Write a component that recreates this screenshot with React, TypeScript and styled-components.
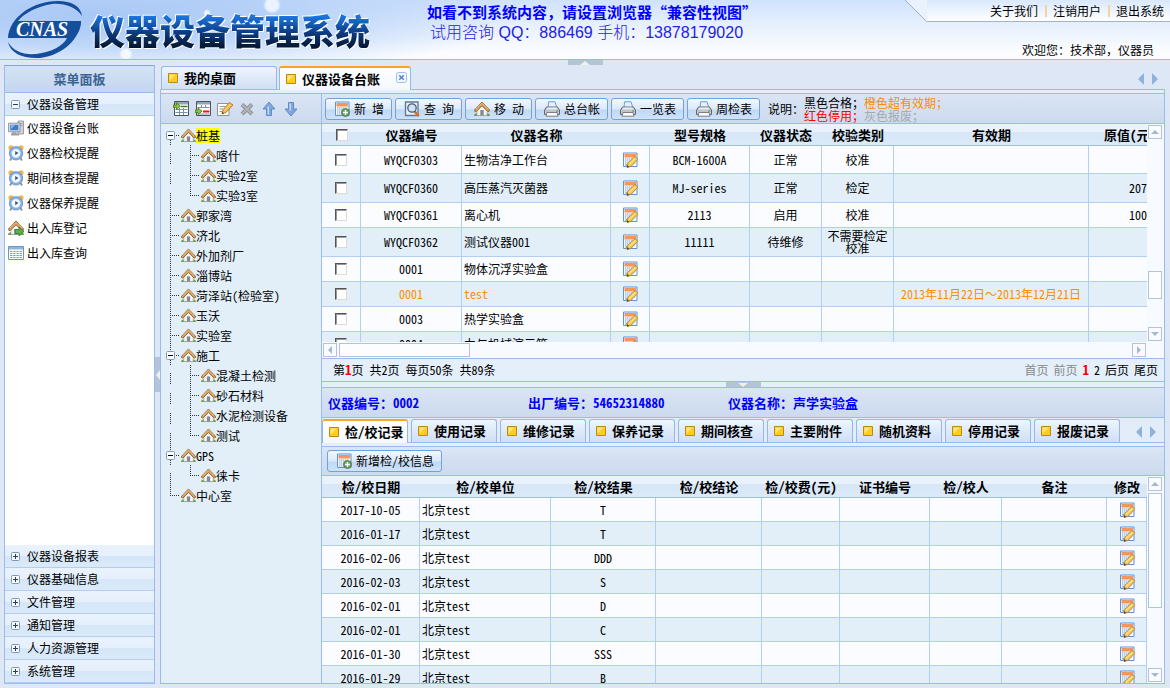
import React from "react";
import styled, { createGlobalStyle, css } from "styled-components";

const line = "#99bbee";
const cellLine = "#b2cef5";
const pale = "#e2eff8";

const GlobalStyle = createGlobalStyle`
  * { box-sizing: border-box; }
  html, body, #root { height: 100%; }
  body {
    margin: 0;
    background: #dde7f6;
    color: #000;
    font: 12px/16px "Noto Sans CJK SC", sans-serif;
    font-feature-settings: "hwid";
  }
  button, input { font: inherit; font-feature-settings: inherit; color: inherit; margin: 0; }
  button { padding: 0; border: 0; background: none; cursor: pointer; }
  a { color: inherit; text-decoration: none; }
  svg { display: block; flex: none; }
`;

/* ---------- icons ---------- */

const HouseShape = () => (
  <>
    <path d="M0 15c0-2 2-3.500 4-2.500h8c2-1 4 .5 4 2.500z" fill="#6f9f48" />
    <path d="M3 7.500 8 3l5 4.500V14.500H3z" fill="#f3f4f6" stroke="#9a9ca3" strokeWidth=".6" />
    <path d="M6.300 9h3.400v5.500H6.300z" fill="#858995" />
    <path d="M0 9.500 8 1l8 8.500-2 1.300-6-6-6 6z" fill="#d39b57" stroke="#8f6535" strokeWidth=".9" />
    <path d="M2 8.200 8 2.300l6 5.900" fill="none" stroke="#ecc48c" strokeWidth=".9" />
  </>
);

const House = ({ size = 15 }: { size?: number }) => (
  <svg width={size} height={size} viewBox="0 0 16 16" aria-hidden="true">
    <HouseShape />
  </svg>
);

const HouseGo = () => (
  <svg width="16" height="16" viewBox="0 0 16 16" aria-hidden="true">
    <HouseShape />
    <path d="M7 9.500h4V7l5 4.500-5 4.500v-2.500H7z" fill="#5fae4c" stroke="#2f7a2a" strokeWidth=".8" />
  </svg>
);

const Clock = () => (
  <svg width="16" height="16" viewBox="0 0 16 16" aria-hidden="true">
    <circle cx="3" cy="2.800" r="2.600" fill="#f0b54a" />
    <circle cx="13" cy="2.800" r="2.600" fill="#f0b54a" />
    <path d="M3.500 13 2 15.500M12.500 13l1.500 2.500" stroke="#8b919b" strokeWidth="1.800" />
    <circle cx="8" cy="8.300" r="6.700" fill="#84b0ea" stroke="#5584c4" strokeWidth=".7" />
    <circle cx="8" cy="8.300" r="4.400" fill="#f8fbff" stroke="#b5cdec" strokeWidth=".6" />
    <path d="M7.200 6v4.200L10.500 8z" fill="#39557e" />
  </svg>
);

const Computer = () => (
  <svg width="16" height="16" viewBox="0 0 16 16" aria-hidden="true">
    <path d="M10 1h5.500v13H10z" fill="#d0d4d8" stroke="#868c94" strokeWidth=".8" />
    <path d="M11 3.500h3.500M11 5.500h3.500" stroke="#8b9199" strokeWidth=".8" />
    <path d="M.6 3.200h11.400v8.600H.6z" fill="#dfe3e8" stroke="#858c96" strokeWidth=".9" />
    <path d="M2.200 4.700h8.200v5.600H2.200z" fill="#3f7ccd" />
    <path d="M3 5.300h4L3 9z" fill="#8fbaf0" />
    <path d="M4 12.200h4.500v1.300H11V15.500H3v-2h1z" fill="#9aa1aa" />
  </svg>
);

const Sheet = () => (
  <svg width="16" height="16" viewBox="0 0 16 16" aria-hidden="true">
    <path d="M.5 1.500h15v13H.5z" fill="#fff" stroke="#6f93c6" />
    <path d="M1 2h14v2.500H1z" fill="#8fb5e6" />
    <path d="M2 6.500h12M2 8.500h12M2 10.500h12M2 12.500h12" stroke="#7c9ac8" strokeDasharray="2.400 .8" />
  </svg>
);

const SheetBase = () => (
  <>
    <path d="M1.500 1h13.500v13.500H1.500z" fill="#f6f9fd" stroke="#5f92d6" />
    <path d="M2.500 2h11.500v3.500H2.500z" fill="#f5975a" />
    <path d="M3 7h10M3 9h10M3 11h10M3 13h8" stroke="#a9c0e2" strokeWidth="1.300" strokeDasharray="1.400 .6" />
  </>
);

const SheetEdit = () => (
  <svg width="16" height="16" viewBox="0 0 16 16" aria-hidden="true">
    <SheetBase />
    <path d="M4 12h3v2.500H4z" fill="#8cbd7c" />
    <path d="m5 15.300.6-3.800 7.400-7 3 2.700-7.200 7.300z" fill="#f5c94e" stroke="#b07c28" strokeWidth=".8" />
    <path d="M7 12.500 13.500 6.300" stroke="#fbe59a" strokeWidth="1.100" />
    <path d="m4.800 15.700.6-2.400 2 1.600z" fill="#5b4326" />
  </svg>
);

const SheetAdd = () => (
  <svg width="16" height="16" viewBox="0 0 16 16" aria-hidden="true">
    <SheetBase />
    <circle cx="11.500" cy="11.500" r="4" fill="#6a9d5e" stroke="#41723a" strokeWidth=".7" />
    <path d="M11.500 9v5M9 11.500h5" stroke="#fff" strokeWidth="1.400" />
  </svg>
);

const SheetSearch = () => (
  <svg width="16" height="16" viewBox="0 0 16 16" aria-hidden="true">
    <path d="M1.500 1h12.500v13.500H1.500z" fill="#eef2f8" stroke="#5f7598" strokeWidth="1.300" />
    <path d="m10.500 10.500 4.300 4.500" stroke="#c97a2b" strokeWidth="2.600" />
    <circle cx="8" cy="7" r="4.200" fill="#cfe3f7" stroke="#4c5d78" strokeWidth="1.300" />
  </svg>
);

const Printer = () => (
  <svg width="16" height="16" viewBox="0 0 16 16" aria-hidden="true">
    <path d="M4.500.8h6.500L13 7H4z" fill="#e6f1ff" stroke="#6f9ad8" strokeWidth="1" />
    <path d="M2.500 6h11l2 3v4.500H.5V9z" fill="#bfc5cc" stroke="#666d78" strokeWidth="1" />
    <path d="M3.500 6.500h9l1 2H2.500z" fill="#e8ecf0" />
    <path d="M3 11.500h10l1 3.700H2z" fill="#fafafa" stroke="#6f757e" strokeWidth=".9" />
    <path d="M12 10h2.500" stroke="#5b9a4c" />
  </svg>
);

const InsertAbove = () => (
  <svg width="16" height="16" viewBox="0 0 16 16" aria-hidden="true">
    <path d="M1.500.5h14v14h-14z" fill="#fff" stroke="#4b535c" />
    <path d="M2 1h13v2.500H2z" fill="#8fa8b4" />
    <path d="M2.500 8.500h12M2.500 11.500h12M6.500 7v7M10.500 7v7" stroke="#7f92a2" />
    <path d="M0 4h3.500V1.800l4 3.400-4 3.400V6.400H0z" fill="#8ac832" stroke="#3d6b12" strokeWidth=".7" />
    <path d="M8 5.500h6.500" stroke="#2f7a1e" strokeWidth="1.400" />
  </svg>
);

const InsertBelow = () => (
  <svg width="16" height="16" viewBox="0 0 16 16" aria-hidden="true">
    <path d="M1.500.5h14v14h-14z" fill="#fff" stroke="#4b535c" />
    <path d="M2 1h13v2.500H2z" fill="#8fa8b4" />
    <path d="M2.500 6.500h12M2.500 13h12M6.500 4v3M10.500 4v3" stroke="#7f92a2" />
    <path d="M0 9h3V6.800l4 3.400-4 3.400v-2.200H0z" fill="#8ac832" stroke="#3d6b12" strokeWidth=".7" />
    <path d="M8 10.500h6.500" stroke="#f01414" strokeWidth="2" />
  </svg>
);

const NoteEdit = () => (
  <svg width="16" height="16" viewBox="0 0 16 16" aria-hidden="true">
    <path d="M.5 2.500H12v12H.5z" fill="#fbfbf8" stroke="#93938d" />
    <path d="M2.500 5.500h6M2.500 8h4M2.500 10.500h3" stroke="#999" />
    <path d="m5 12.800 1-4 6.500-7.300L16 4l-7 7.500z" fill="#f4b544" stroke="#a3702a" strokeWidth=".8" />
    <path d="m7 10 6.500-7" stroke="#fbdc8e" strokeWidth="1.100" />
    <path d="m4.800 13.200.6-2.200 1.700 1.200z" fill="#4d3a22" />
  </svg>
);

const Cross = () => (
  <svg width="16" height="16" viewBox="0 0 16 16" aria-hidden="true">
    <path d="m3 3.500 10 9.500M13 3.500 3 13" stroke="#8d9197" strokeWidth="4" />
    <path d="m3.300 3.800 9.400 8.900M12.700 3.800 3.300 12.700" stroke="#b0b4ba" strokeWidth="2" />
  </svg>
);

const Arrow = ({ down = false }: { down?: boolean }) => (
  <svg width="16" height="16" viewBox="0 0 16 16" aria-hidden="true">
    <path
      d={down ? "M5.500 1.500h5v6.500h3.500L8 15 2 8h3.500z" : "M5.500 14.500h5V8h3.500L8 1 2 8h3.500z"}
      fill="#7fa6de"
      stroke="#5f86be"
      strokeWidth=".9"
    />
    <path d={down ? "M6.500 2.500h1.500v7H6.500z" : "M6.500 5.500h1.500v8H6.500z"} fill="#c4d9f5" />
  </svg>
);

const TabMark = () => (
  <svg width="10" height="10" viewBox="0 0 10 10" aria-hidden="true">
    <path d="M.5.5h9v9h-9z" fill="#ffcd1f" stroke="#b98a0c" />
    <path d="M1.500 1.500h6l-6 6z" fill="#ffe678" />
  </svg>
);

const CloseMark = () => (
  <svg width="11" height="11" viewBox="0 0 11 11" aria-hidden="true">
    <rect x=".5" y=".5" width="10" height="10" rx="2" fill="#f4f9ff" stroke="#9dbfe8" />
    <path d="m3.200 3.200 4.600 4.600M7.800 3.200 3.200 7.800" stroke="#5b86c4" strokeWidth="1.600" />
  </svg>
);

const FoldMark = ({ open = false }: { open?: boolean }) => (
  <svg width="9" height="9" viewBox="0 0 9 9" aria-hidden="true">
    <rect x=".5" y=".5" width="8" height="8" rx="1" fill="#f5f9fd" stroke="#8299b5" />
    <path d={open ? "M2 4.500h5" : "M2 4.500h5M4.500 2v5"} stroke="#23415f" />
  </svg>
);

type Dir = "up" | "down" | "left" | "right";
const turns: Record<Dir, number> = { up: 0, right: 90, down: 180, left: 270 };

const Wedge = ({ dir }: { dir: Dir }) => (
  <svg width="8" height="8" viewBox="0 0 8 8" aria-hidden="true">
    <path d="M0 6h8L4 2z" fill="#a3b9d6" transform={`rotate(${turns[dir]} 4 4)`} />
  </svg>
);

const TabArrow = ({ right = false }: { right?: boolean }) => (
  <svg width="6" height="12" viewBox="0 0 6 12" aria-hidden="true">
    <path d={right ? "M0 0v12l6-6z" : "M6 0v12L0 6z"} fill="#8db2dc" />
  </svg>
);

const Logo = () => (
  <svg width="78" height="59" viewBox="0 0 78 59" role="img" aria-label="CNAS">
    <path
      d="M2 38C3 18 26 1 52 1c13 0 23 5 24 15C70 7 58 3 46 4 32 6 18 13 12 21h63c0 6-2 12-7 17z"
      fill="#154f9c"
    />
    <path d="M2 42c5 9 15 13 28 12 16-2 27-8 31-16l9-8 5-9c-1 17-17 34-41 37C17 59 4 53 2 42z" fill="#154f9c" />
    <text
      x="10"
      y="36"
      fill="#fff"
      fontFamily="Liberation Serif, serif"
      fontSize="20"
      fontWeight="700"
      fontStyle="italic"
    >
      CNAS
    </text>
  </svg>
);

/* ---------- header ---------- */

const Page = styled.div`
  display: flex;
  flex-direction: column;
  height: 100%;
  min-height: 560px;
  overflow: hidden;
`;

const Header = styled.header`
  display: flex;
  flex: 0 0 60px;
  border-bottom: 1px solid ${line};
  background:
    radial-gradient(circle at 272px 5px, #eaf3ff 6px, transparent 9px),
    radial-gradient(circle at 207px 13px, #eaf3ff 2px, transparent 4px),
    radial-gradient(circle at 126px 54px, #f4f9ff 4px, transparent 7px),
    radial-gradient(ellipse 420px 64px at 100px 16px, #a8c8f5 0, rgba(176, 205, 247, 0.8) 45%, transparent 100%),
    linear-gradient(#cfe2fd 0, #e8f1fd 45%, #fcfdff 90%);
`;

const Brand = styled.div`
  display: flex;
  flex: 0 0 427px;
  gap: 6px;
  padding-left: 6px;
`;

const Title = styled.h1`
  margin: 6px 0 0;
  font-size: 35px;
  line-height: 48px;
  font-weight: 900;
  white-space: nowrap;
  color: transparent;
  background: linear-gradient(#1c74dc 20%, #0d3c84 50%, #04142a 80%);
  background-clip: text;
  -webkit-background-clip: text;
  filter: drop-shadow(1px 1px 0 #fff) drop-shadow(-1px -1px 0 #fff);
`;

const Notice = styled.div`
  flex: none;
  color: #00f;
  white-space: nowrap;
  font-feature-settings: normal;
`;

const NoticeMain = styled.p`
  margin: 0;
  font-size: 15px;
  line-height: 23px;
  font-weight: 700;
`;

const NoticeSub = styled.p`
  margin: 0 0 0 3px;
  font: 16px/20px "Liberation Sans", "Noto Sans CJK SC", sans-serif;
  font-weight: 300;
  color: #2222e8;
`;

const Account = styled.div`
  flex: none;
  margin-left: auto;
  text-align: right;
`;

const LinkBar = styled.nav`
  display: flex;
  height: 22px;
`;

const Links = styled.div`
  display: flex;
  align-items: center;
  justify-content: flex-end;
  gap: 7px;
  width: 243px;
  padding-right: 6px;
  border-bottom: 1px solid #a9b3c0;
  background: linear-gradient(#d9e8fc, #fff);

  a + a {
    padding-left: 6px;
    border-left: 2px solid #f3d3a0;
    line-height: 12px;
  }
`;

const Welcome = styled.p`
  margin: 20px 16px 0 0;
  font-feature-settings: normal;
`;

const Handle = styled.button<{ $side: "top" | "left" | "down" }>`
  display: flex;
  align-items: center;
  justify-content: center;
  align-self: center;
  overflow: hidden;
  background: #b4c3d8;
  ${(p) =>
    p.$side === "left"
      ? css`
          width: 5px;
          height: 35px;
        `
      : css`
          width: 35px;
          height: 5px;
        `}
`;

const HandleMark = ({ side }: { side: "top" | "left" | "down" }) => (
  <svg width={side === "left" ? 4 : 12} height={side === "left" ? 12 : 4} aria-hidden="true">
    <path
      d={side === "left" ? "M4 1v10L0 6z" : side === "top" ? "M1 4h10L6 0z" : "M1 0h10L6 4z"}
      fill="#eef0ea"
    />
  </svg>
);

/* ---------- frame ---------- */

const TopSplit = styled.div`
  display: flex;
  flex: 0 0 5px;
  flex-direction: column;
`;

const Body = styled.div`
  display: flex;
  flex: 1;
  min-height: 0;
  padding: 0 5px 4px 4px;
`;

const SideSplit = styled.div`
  display: flex;
  flex: 0 0 5px;
`;

const Sidebar = styled.aside`
  display: flex;
  flex: 0 0 151px;
  flex-direction: column;
  border: 1px solid ${line};
  border-top-color: #86a5d3;
  background: #fff;
`;

const SideTitle = styled.h2`
  margin: 0;
  height: 27px;
  border-bottom: 1px solid ${line};
  background: linear-gradient(#d5e2f4, #c3d6f0);
  color: #3d6594;
  font-size: 13px;
  line-height: 25px;
  text-align: center;
`;

const Section = styled.button`
  display: flex;
  flex: none;
  align-items: center;
  gap: 7px;
  width: 100%;
  height: 23px;
  padding-left: 6px;
  border-bottom: 1px solid ${cellLine};
  background: linear-gradient(#e9f2fd 0, #e6f0fc 50%, #d5e6f8 50%, #daeafa 100%);
`;

const Menu = styled.ul`
  flex: 1;
  min-height: 0;
  margin: 0;
  padding: 0;
  list-style: none;
  overflow: hidden;
`;

const MenuLink = styled.a`
  display: flex;
  align-items: center;
  gap: 3px;
  height: 25px;
  padding: 0 0 2px 3px;
`;

const Main = styled.main`
  display: flex;
  flex: 1;
  flex-direction: column;
  min-width: 0;
`;

const TabStrip = styled.div<{ $inner?: boolean }>`
  display: flex;
  flex: none;
  align-items: flex-end;
  gap: ${(p) => (p.$inner ? 3 : 2)}px;
  height: 24px;
  padding-left: ${(p) => (p.$inner ? 0 : 1)}px;
  background: ${(p) => (p.$inner ? "#e3ecf9" : "transparent")};
`;

const Tab = styled.button<{ $active?: boolean; $width: number }>`
  display: flex;
  flex: 0 0 ${(p) => p.$width}px;
  align-items: center;
  gap: 6px;
  height: 23px;
  padding: 0 3px 0 6px;
  border: 1px solid #94b8e8;
  border-bottom: 0;
  border-radius: 3px 3px 0 0;
  background: linear-gradient(#eef5fe, #cfdff5);
  font-size: 13px;
  font-weight: 700;
  white-space: nowrap;

  svg:last-child:not(:first-child) {
    align-self: flex-start;
    margin: 4px 0 0 auto;
  }

  ${(p) =>
    p.$active &&
    css`
      position: relative;
      height: 24px;
      margin-bottom: -1px;
      border-top: 2px solid #f5a623;
      background: linear-gradient(#fff, #f4f8fe);
    `}
`;

const TabArrows = styled.div<{ $inner?: boolean }>`
  display: flex;
  gap: 8px;
  align-self: center;
  margin-left: auto;
  padding: 4px ${(p) => (p.$inner ? 8 : 7)}px 0 0;
`;

const Panel = styled.div<{ $outer?: boolean }>`
  display: flex;
  flex: 1;
  min-height: 0;
  padding-top: 3px;
  border-top: 1px solid ${line};
  background: #e5eefb;
  ${(p) =>
    p.$outer &&
    css`
      border: 1px solid ${line};
    `}
`;

const Column = styled.section`
  display: flex;
  flex: 1;
  flex-direction: column;
  min-width: 0;
  min-height: 0;
  border-top: 1px solid ${line};
`;

const Toolbar = styled.div<{ $gap: number; $pad: number; $low?: boolean }>`
  display: flex;
  flex: none;
  align-items: center;
  gap: ${(p) => p.$gap}px;
  height: ${(p) => (p.$low ? 29 : 30)}px;
  padding: 0 ${(p) => p.$pad}px;
  border-bottom: 1px solid ${line};
  background: linear-gradient(#dae5f5, #ccdaee);
  white-space: nowrap;
`;

/* ---------- tree ---------- */

const TreePanel = styled.section`
  display: flex;
  flex: 0 0 161px;
  flex-direction: column;
  border-top: 1px solid ${line};
  border-right: 1px solid ${line};
  background: #e2eef8;
`;

const Tree = styled.ul`
  margin: 0;
  padding: 1px 0 0;
  list-style: none;
`;

const TreeRow = styled.li`
  display: flex;
  align-items: center;
  height: 20px;
  white-space: nowrap;
`;

const TreeLink = styled.a<{ $picked?: boolean }>`
  line-height: 15px;
  background: ${(p) => (p.$picked ? "#ff0" : "none")};
`;

type Joint = "tee" | "end" | "guide" | "first" | "fold";

const jointPath: Record<Joint, string> = {
  tee: "M9.500 0v20M11 10.500h8",
  end: "M9.500 0v11M11 10.500h8",
  guide: "M9.500 8v12",
  first: "M9.500 15v5M15 10.500h4",
  fold: "M9.500 0v6M9.500 15v5M15 10.500h4",
};

const Connector = ({ kind }: { kind: Joint }) => (
  <svg width="20" height="20" viewBox="0 0 20 20" aria-hidden="true">
    <path d={jointPath[kind]} stroke="#333" strokeDasharray="1 1" />
    {(kind === "first" || kind === "fold") && (
      <g>
        <rect x="5.500" y="6.500" width="8" height="8" rx="1" fill="#fff" stroke="#7e9cc4" />
        <path d="M7 10.500h5" stroke="#000" />
      </g>
    )}
  </svg>
);

const tree: { name: string; joints: Joint[]; picked?: boolean }[] = [
  { name: "桩基", joints: ["first"], picked: true },
  { name: "喀什", joints: ["guide", "tee"] },
  { name: "实验2室", joints: ["guide", "tee"] },
  { name: "实验3室", joints: ["guide", "end"] },
  { name: "郭家湾", joints: ["tee"] },
  { name: "济北", joints: ["tee"] },
  { name: "外加剂厂", joints: ["tee"] },
  { name: "淄博站", joints: ["tee"] },
  { name: "菏泽站(检验室)", joints: ["tee"] },
  { name: "玉沃", joints: ["tee"] },
  { name: "实验室", joints: ["tee"] },
  { name: "施工", joints: ["fold"] },
  { name: "混凝土检测", joints: ["guide", "tee"] },
  { name: "砂石材料", joints: ["guide", "tee"] },
  { name: "水泥检测设备", joints: ["guide", "tee"] },
  { name: "测试", joints: ["guide", "end"] },
  { name: "GPS", joints: ["fold"] },
  { name: "徕卡", joints: ["guide", "end"] },
  { name: "中心室", joints: ["end"] },
];

/* ---------- content ---------- */

const ToolButton = styled.button`
  display: flex;
  flex: none;
  align-items: center;
  gap: 4px;
  height: 22px;
  padding: 0 7px 0 8px;
  border: 1px solid #6ea3dc;
  border-radius: 3px;
  background: linear-gradient(#f2f8ff 0, #dbe9fa 50%, #bfd8f4 55%, #cfe3f9 100%);
  white-space: pre;
`;

const Legend = styled.div`
  display: flex;
  align-items: center;
  margin-left: 5px;
`;

const LegendGrid = styled.div`
  display: grid;
  grid-template-columns: 60px auto;
  line-height: 13px;
`;

const Tint = styled.span<{ $color: string }>`
  color: ${(p) => p.$color};
`;

const FullWidth = styled.span`
  font-feature-settings: normal;
`;

const Viewport = styled.div<{ $grow?: boolean }>`
  display: flex;
  flex: ${(p) => (p.$grow ? "1 1 0" : "0 0 218px")};
  min-height: 0;
  background: #f7faff;
`;

const Clip = styled.div`
  flex: 1;
  min-width: 0;
  overflow: hidden;
`;

const Table = styled.table`
  width: 100%;
  table-layout: fixed;
  border-collapse: separate;
  border-spacing: 0;
`;

const Head = styled.th`
  height: 22px;
  padding: 0;
  border-bottom: 1px solid ${line};
  background: linear-gradient(#eaf3fd 0, #e8f1fc 38%, #d7e7f7 38%, #dbe9f8 100%);
  font-size: 13px;
  font-weight: 700;
  white-space: nowrap;
`;

const Row = styled.tr<{ $height: number; $late?: boolean }>`
  height: ${(p) => p.$height}px;
  color: ${(p) => (p.$late ? "#ff8c00" : "inherit")};
  background: #fafcff;
  &:nth-child(even) {
    background: ${pale};
  }
`;

const Cell = styled.td<{ $left?: boolean; $amount?: boolean }>`
  padding: 0 0 0 ${(p) => (p.$amount ? 40 : p.$left ? 2 : 0)}px;
  border-right: 1px solid ${cellLine};
  border-bottom: 1px solid ${cellLine};
  line-height: 12px;
  text-align: ${(p) => (p.$left || p.$amount ? "left" : "center")};
  white-space: nowrap;
`;

const Tick = styled.input`
  display: block;
  width: 12px;
  height: 12px;
  margin: 0 auto;
  appearance: none;
  background: #fff;
  border: 1px solid #dcdcd4;
  border-top-color: #555;
  border-left-color: #555;
  box-shadow: inset 1px 1px 0 #999;
`;

const IconButton = styled.button`
  display: block;
  margin: 0 auto;
`;

const PlainButton = styled.button`
  display: block;
`;

const VBar = styled.div`
  display: flex;
  flex: 0 0 17px;
  flex-direction: column;
  padding: 1px 2px 1px 1px;
`;

const HBar = styled.div`
  display: flex;
  flex: 0 0 16px;
  gap: 2px;
  padding: 1px 18px 1px 1px;
  background: #f7faff;
`;

const BarButton = styled.button`
  display: flex;
  flex: 0 0 14px;
  align-items: center;
  justify-content: center;
  width: 14px;
  height: 14px;
  border: 1px solid #b2c3da;
  background: #f9fbff;
`;

const VThumb = styled.div<{ $top: number; $size: number }>`
  flex: 0 1 ${(p) => p.$size}px;
  width: 14px;
  margin-top: ${(p) => p.$top}px;
  margin-bottom: auto;
  border: 1px solid #b2c3da;
  background: #fbfdff;
`;

const HThumb = styled.div`
  flex: 0 0 131px;
  height: 14px;
  margin-right: auto;
  border: 1px solid #b2c3da;
  background: #fbfdff;
`;

const Pager = styled.div`
  display: flex;
  flex: 0 0 24px;
  align-items: center;
  gap: 6px;
  padding: 0 6px 0 11px;
  border-top: 1px solid ${line};
  border-bottom: 1px solid ${line};
  background: #e4eff9;
`;

const PageLinks = styled.nav`
  display: flex;
  gap: 5px;
  margin-left: auto;
`;

const Current = styled.b`
  color: #f00;
  font-size: 13px;
`;

const Splitter = styled.div`
  display: flex;
  flex: 0 0 5px;
  flex-direction: column;
`;

const InfoBar = styled.div`
  display: flex;
  flex: 0 0 31px;
  align-items: center;
  padding-left: 6px;
  border-top: 1px solid ${line};
  border-bottom: 1px solid ${line};
  background: linear-gradient(#dae5f5, #ccdaee);
  color: #00f;
  font-size: 13px;
  font-weight: 700;
`;

const InfoItem = styled.span`
  flex: 0 0 200px;
  white-space: nowrap;
`;

const menu: [string, () => React.ReactElement][] = [
  ["仪器设备台账", Computer],
  ["仪器检校提醒", Clock],
  ["期间核查提醒", Clock],
  ["仪器保养提醒", Clock],
  ["出入库登记", HouseGo],
  ["出入库查询", Sheet],
];

const sections = ["仪器设备报表", "仪器基础信息", "文件管理", "通知管理", "人力资源管理", "系统管理"];

const House16 = () => <House size={16} />;

const actions: [string, () => React.ReactElement][] = [
  ["新 增", SheetAdd],
  ["查 询", SheetSearch],
  ["移 动", House16],
  ["总台帐", Printer],
  ["一览表", Printer],
  ["周检表", Printer],
];

const treeActions: [string, React.ReactElement][] = [
  ["插入", <InsertAbove />],
  ["插入下级", <InsertBelow />],
  ["编辑", <NoteEdit />],
  ["删除", <Cross />],
  ["上移", <Arrow />],
  ["下移", <Arrow down />],
];

interface Device {
  code: string;
  name: string;
  model?: string;
  state?: string;
  kind?: string[];
  valid?: [string, string];
  price?: string;
  height: number;
  late?: boolean;
}

const devices: Device[] = [
  { code: "WYQCF0303", name: "生物洁净工作台", model: "BCM-1600A", state: "正常", kind: ["校准"], height: 28 },
  { code: "WYQCF0360", name: "高压蒸汽灭菌器", model: "MJ-series", state: "正常", kind: ["检定"], price: "207", height: 29 },
  { code: "WYQCF0361", name: "离心机", model: "2113", state: "启用", kind: ["校准"], price: "100", height: 25 },
  { code: "WYQCF0362", name: "测试仪器001", model: "11111", state: "待维修", kind: ["不需要检定", "校准"], height: 29 },
  { code: "0001", name: "物体沉浮实验盒", height: 25 },
  { code: "0001", name: "test", valid: ["2013年11月22日", "2013年12月21日"], height: 25, late: true },
  { code: "0003", name: "热学实验盒", height: 25 },
  { code: "0004", name: "力与机械演示箱", height: 25 },
];

const deviceColumns: [string, number][] = [
  ["仪器编号", 101],
  ["仪器名称", 149],
  ["", 39],
  ["型号规格", 100],
  ["仪器状态", 72],
  ["校验类别", 72],
  ["有效期", 195],
  ["原值(元)", 82],
];

const recordTabs = [
  "检/校记录",
  "使用记录",
  "维修记录",
  "保养记录",
  "期间核查",
  "主要附件",
  "随机资料",
  "停用记录",
  "报废记录",
];

const recordColumns: [string, number | undefined][] = [
  ["检/校日期", 98],
  ["检/校单位", 131],
  ["检/校结果", 105],
  ["检/校结论", 106],
  ["检/校费(元)", 78],
  ["证书编号", 90],
  ["检/校人", 72],
  ["备注", undefined],
  ["修改", 40],
];

const records: [string, string][] = [
  ["2017-10-05", "T"],
  ["2016-01-17", "T"],
  ["2016-02-06", "DDD"],
  ["2016-02-03", "S"],
  ["2016-02-01", "D"],
  ["2016-02-01", "C"],
  ["2016-01-30", "SSS"],
  ["2016-01-29", "B"],
];

const DeviceTable = styled(Table)`
  width: 849px;
`;

export default function App() {
  return (
    <Page>
      <GlobalStyle />
      <Header>
        <Brand>
          <Logo />
          <Title>仪器设备管理系统</Title>
        </Brand>
        <Notice>
          <NoticeMain>如看不到系统内容，请设置浏览器“兼容性视图”</NoticeMain>
          <NoticeSub>试用咨询 QQ：886469 手机：13878179020</NoticeSub>
        </Notice>
        <Account>
          <LinkBar>
            <svg width="22" height="22" viewBox="0 0 22 22" aria-hidden="true">
              <path d="M1 0l21 21.500V0z" fill="#e9f2fd" />
              <path d="M0 0l21.500 21.500" stroke="#a9b3c0" />
            </svg>
            <Links>
              <a href="#about">关于我们</a>
              <a href="#logout">注销用户</a>
              <a href="#exit">退出系统</a>
            </Links>
          </LinkBar>
          <Welcome>欢迎您：技术部，仪器员</Welcome>
        </Account>
      </Header>

      <TopSplit>
        <Handle $side="top" aria-label="收起页头">
          <HandleMark side="top" />
        </Handle>
      </TopSplit>

      <Body>
        <Sidebar>
          <SideTitle>菜单面板</SideTitle>
          <Section>
            <FoldMark open />
            仪器设备管理
          </Section>
          <Menu>
            {menu.map(([name, Icon]) => (
              <li key={name}>
                <MenuLink href="#menu">
                  <Icon />
                  {name}
                </MenuLink>
              </li>
            ))}
          </Menu>
          {sections.map((name) => (
            <Section key={name}>
              <FoldMark />
              {name}
            </Section>
          ))}
        </Sidebar>

        <SideSplit>
          <Handle $side="left" aria-label="收起菜单">
            <HandleMark side="left" />
          </Handle>
        </SideSplit>

        <Main>
          <TabStrip>
            <Tab $width={116}>
              <TabMark />
              我的桌面
            </Tab>
            <Tab $width={132} $active>
              <TabMark />
              仪器设备台账
              <CloseMark />
            </Tab>
            <TabArrows>
              <PlainButton aria-label="前一个">
                <TabArrow />
              </PlainButton>
              <PlainButton aria-label="后一个">
                <TabArrow right />
              </PlainButton>
            </TabArrows>
          </TabStrip>

          <Panel $outer>
            <TreePanel>
              <Toolbar $gap={6} $pad={12}>
                {treeActions.map(([name, icon]) => (
                  <PlainButton key={name} aria-label={name}>
                    {icon}
                  </PlainButton>
                ))}
              </Toolbar>
              <Tree>
                {tree.map((node) => (
                  <TreeRow key={node.name}>
                    {node.joints.map((kind, i) => (
                      <Connector key={i} kind={kind} />
                    ))}
                    <House />
                    <TreeLink href="#node" $picked={node.picked}>
                      {node.name}
                    </TreeLink>
                  </TreeRow>
                ))}
              </Tree>
            </TreePanel>

            <Column>
              <Toolbar $gap={3} $pad={3}>
                {actions.map(([name, Icon]) => (
                  <ToolButton key={name}>
                    <Icon />
                    {name}
                  </ToolButton>
                ))}
                <Legend>
                  <span>说明：</span>
                  <LegendGrid>
                    <span>黑色合格；</span>
                    <Tint $color="#ff8c00">橙色超有效期；</Tint>
                    <Tint $color="#f00">红色停用；</Tint>
                    <Tint $color="#a5a9ad">灰色报废；</Tint>
                  </LegendGrid>
                </Legend>
              </Toolbar>

              <Viewport>
                <Clip>
                  <DeviceTable>
                    <colgroup>
                      <col width={39} />
                      {deviceColumns.map(([, width], i) => (
                        <col key={i} width={width} />
                      ))}
                    </colgroup>
                    <thead>
                      <tr>
                        <Head>
                          <Tick type="checkbox" aria-label="全选" />
                        </Head>
                        {deviceColumns.map(([name], i) => (
                          <Head key={i}>{name}</Head>
                        ))}
                      </tr>
                    </thead>
                    <tbody>
                      {devices.map((d, i) => (
                        <Row key={i} $height={d.height} $late={d.late}>
                          <Cell>
                            <Tick type="checkbox" aria-label={d.name} />
                          </Cell>
                          <Cell>{d.code}</Cell>
                          <Cell $left>{d.name}</Cell>
                          <Cell>
                            <IconButton aria-label="修改">
                              <SheetEdit />
                            </IconButton>
                          </Cell>
                          <Cell>{d.model}</Cell>
                          <Cell>{d.state}</Cell>
                          <Cell>
                            {d.kind?.map((k) => (
                              <div key={k}>{k}</div>
                            ))}
                          </Cell>
                          <Cell>
                            {d.valid && (
                              <>
                                {d.valid[0]}
                                <FullWidth>～</FullWidth>
                                {d.valid[1]}
                              </>
                            )}
                          </Cell>
                          <Cell $amount>{d.price}</Cell>
                        </Row>
                      ))}
                    </tbody>
                  </DeviceTable>
                </Clip>
                <VBar>
                  <BarButton aria-label="向上">
                    <Wedge dir="up" />
                  </BarButton>
                  <VThumb $top={132} $size={28} />
                  <BarButton aria-label="向下">
                    <Wedge dir="down" />
                  </BarButton>
                </VBar>
              </Viewport>
              <HBar>
                <BarButton aria-label="向左">
                  <Wedge dir="left" />
                </BarButton>
                <HThumb />
                <BarButton aria-label="向右">
                  <Wedge dir="right" />
                </BarButton>
              </HBar>

              <Pager>
                <span>
                  第<Current>1</Current>页
                </span>
                <span>共2页</span>
                <span>每页50条</span>
                <span>共89条</span>
                <PageLinks>
                  <Tint $color="#888">首页</Tint>
                  <Tint $color="#888">前页</Tint>
                  <Current>1</Current>
                  <a href="#page2">2</a>
                  <a href="#next">后页</a>
                  <a href="#last">尾页</a>
                </PageLinks>
              </Pager>

              <Splitter>
                <Handle $side="down" aria-label="收起明细">
                  <HandleMark side="down" />
                </Handle>
              </Splitter>

              <InfoBar>
                <InfoItem>仪器编号：0002</InfoItem>
                <InfoItem>出厂编号：54652314880</InfoItem>
                <InfoItem>仪器名称：声学实验盒</InfoItem>
              </InfoBar>

              <TabStrip $inner>
                {recordTabs.map((name, i) => (
                  <Tab key={name} $width={86} $active={i === 0}>
                    <TabMark />
                    {name}
                  </Tab>
                ))}
                <TabArrows $inner>
                  <PlainButton aria-label="前一个">
                    <TabArrow />
                  </PlainButton>
                  <PlainButton aria-label="后一个">
                    <TabArrow right />
                  </PlainButton>
                </TabArrows>
              </TabStrip>

              <Panel>
                <Column>
                  <Toolbar $gap={3} $pad={5} $low>
                    <ToolButton>
                      <SheetAdd />
                      新增检/校信息
                    </ToolButton>
                  </Toolbar>
                  <Viewport $grow>
                    <Clip>
                      <Table>
                        <colgroup>
                          {recordColumns.map(([name, width]) => (
                            <col key={name} width={width} />
                          ))}
                        </colgroup>
                        <thead>
                          <tr>
                            {recordColumns.map(([name]) => (
                              <Head key={name}>{name}</Head>
                            ))}
                          </tr>
                        </thead>
                        <tbody>
                          {records.map(([date, result], i) => (
                            <Row key={i} $height={24}>
                              <Cell>{date}</Cell>
                              <Cell $left>北京test</Cell>
                              <Cell>{result}</Cell>
                              <Cell />
                              <Cell />
                              <Cell />
                              <Cell />
                              <Cell />
                              <Cell>
                                <IconButton aria-label="修改">
                                  <SheetEdit />
                                </IconButton>
                              </Cell>
                            </Row>
                          ))}
                        </tbody>
                      </Table>
                    </Clip>
                    <VBar>
                      <BarButton aria-label="向上">
                        <Wedge dir="up" />
                      </BarButton>
                      <VThumb $top={2} $size={115} />
                      <BarButton aria-label="向下">
                        <Wedge dir="down" />
                      </BarButton>
                    </VBar>
                  </Viewport>
                </Column>
              </Panel>
            </Column>
          </Panel>
        </Main>
      </Body>
    </Page>
  );
}
